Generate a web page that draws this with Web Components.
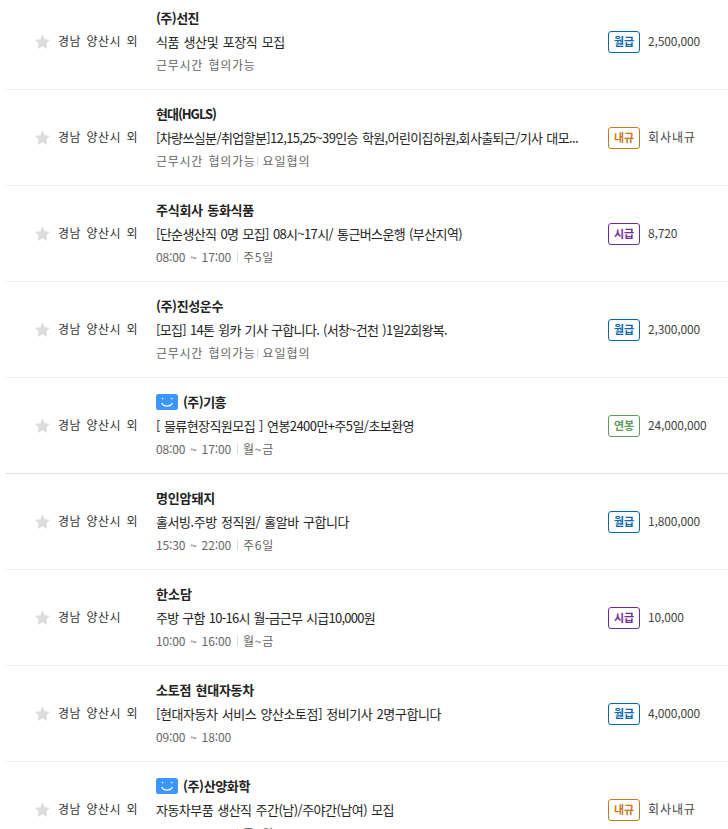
<!DOCTYPE html>
<html lang="ko">
<head>
<meta charset="utf-8">
<title>채용정보</title>
<style>
    html, body {
        margin: 0;
        height: 829px;
        overflow: hidden;
        background: #fff;
        font-family: "Noto Sans CJK KR", "Liberation Sans", sans-serif;
    }
</style>
</head>
<body>
<job-list></job-list>

<script>
const JOBS = [
    { area: '경남 양산시 외', company: '(주)선진', name: 43, title: '식품 생산및 포장직 모집', width: 129, time: '근무시간 협의가능', type: '월급', pay: '2,500,000' },
    { area: '경남 양산시 외', company: '현대(HGLS)', name: 60, title: '[차량쓰실분/취업할분]12,15,25~39인승 학원,어린이집하원,회사출퇴근/기사 대모...', width: 422, time: '근무시간 협의가능', days: '요일협의', type: '내규', pay: '회사내규' },
    { area: '경남 양산시 외', company: '주식회사 동화식품', name: 98, title: '[단순생산직 0명 모집] 08시~17시/ 통근버스운행 (부산지역)', width: 306, time: '08:00 ~ 17:00', days: '주5일', type: '시급', pay: '8,720' },
    { area: '경남 양산시 외', company: '(주)진성운수', name: 67, title: '[모집] 14톤 윙카 기사 구합니다. (서창~건천 )1일2회왕복.', width: 291, time: '근무시간 협의가능', days: '요일협의', type: '월급', pay: '2,300,000' },
    { area: '경남 양산시 외', company: '(주)기흥', name: 43, smile: true, title: '[ 물류현장직원모집 ] 연봉2400만+주5일/초보환영', width: 258, time: '08:00 ~ 17:00', days: '월~금', type: '연봉', pay: '24,000,000', last: true },
    { area: '경남 양산시 외', company: '명인암돼지', name: 59, title: '홀서빙.주방 정직원/ 홀알바 구합니다', width: 193, time: '15:30 ~ 22:00', days: '주6일', type: '월급', pay: '1,800,000' },
    { area: '경남 양산시', company: '한소담', name: 36, title: '주방 구함 10-16시 월-금근무 시급10,000원', width: 219, time: '10:00 ~ 16:00', days: '월~금', type: '시급', pay: '10,000' },
    { area: '경남 양산시 외', company: '소토점 현대자동차', name: 98, title: '[현대자동차 서비스 양산소토점] 정비기사 2명구합니다', width: 285, time: '09:00 ~ 18:00', type: '월급', pay: '4,000,000' },
    { area: '경남 양산시 외', company: '(주)산양화학', name: 67, smile: true, title: '자동차부품 생산직 주간(남)/주야간(남여) 모집', width: 238, time: '08:30 ~ 17:30', days: '주5일', type: '내규', pay: '회사내규' }
];

class StarIcon extends HTMLElement {
    constructor() {
        super();
        this.attachShadow({ mode: 'open' }).innerHTML = `
            <style>
                :host { display: block; width: 16px; height: 16px; }
                svg { display: block; }
            </style>
            <svg width="16" height="16" viewBox="0 0 16 16">
                <path fill="#ddd" d="M7.5 .2l2.3 5 5.4.6-4 3.7 1.1 5.4-4.8-2.7-4.8 2.7 1.1-5.4-4-3.7 5.4-.6z"/>
            </svg>
        `;
    }
}

class SmileIcon extends HTMLElement {
    constructor() {
        super();
        this.attachShadow({ mode: 'open' }).innerHTML = `
            <style>
                :host { display: block; width: 22px; height: 16px; margin-right: 5px; }
                svg { display: block; }
            </style>
            <svg width="22" height="16" viewBox="0 0 22 16">
                <rect width="22" height="16" rx="2.5" fill="#3c96ff"/>
                <path fill="#fff" d="M6 4h1.3v1.3H6zM15 4h1.3v1.3h-1.3z"/>
                <path d="M5.7 9c1.8 4.2 8.8 4.2 10.6 0" fill="none" stroke="#fff" stroke-width="1.2"/>
            </svg>
        `;
    }
}

class PayBadge extends HTMLElement {
    constructor() {
        super();
        this.attachShadow({ mode: 'open' }).innerHTML = `
            <style>
                :host {
                    display: block;
                    box-sizing: border-box;
                    width: 32px;
                    height: 22px;
                    border: 1px solid currentColor;
                    border-radius: 3px;
                    font-size: 11px;
                    font-weight: 700;
                    line-height: 19px;
                    text-align: center;
                    color: #0a64ae;
                }
                :host([type="내규"]) { color: #c57a1c; }
                :host([type="시급"]) { color: #702c96; }
                :host([type="연봉"]) { color: #5f9a5a; }
            </style>
            <slot></slot>
        `;
    }
}

class JobRow extends HTMLElement {
    constructor() {
        super();
        this.attachShadow({ mode: 'open' }).innerHTML = `
            <style>
                :host {
                    display: grid;
                    grid-template-columns: 23px 98px 452px 40px 1fr;
                    align-items: center;
                    box-sizing: border-box;
                    height: 96px;
                    padding-left: 29px;
                    border-bottom: 1px solid #eee;
                    font-size: 12px;
                    white-space: nowrap;
                }
                :host([last]) { border-bottom-color: #ddd; }
                .area {
                    color: #333;
                    letter-spacing: 0.5px;
                    word-spacing: 1.6px;
                    line-height: 24px;
                    margin-top: -2px;
                }
                .company {
                    display: flex;
                    align-items: center;
                    height: 24px;
                    font-size: 13px;
                    font-weight: 700;
                    color: #222;
                }
                .title {
                    height: 24px;
                    line-height: 23px;
                    font-size: 13px;
                    color: #222;
                }
                .detail {
                    height: 24px;
                    line-height: 22px;
                    color: #666;
                }
                .pay {
                    color: #444;
                    line-height: 24px;
                    margin-top: -2px;
                    letter-spacing: -0.15px;
                }
                :host([text-pay]) .pay { letter-spacing: 0.9px; }
            </style>
            <star-icon></star-icon>
            <div class="area"><slot name="area"></slot></div>
            <div>
                <div class="company"><slot name="icon"></slot><slot name="company"></slot></div>
                <div class="title"><slot name="title"></slot></div>
                <div class="detail"><slot name="detail"></slot></div>
            </div>
            <slot name="badge"></slot>
            <div class="pay"><slot name="pay"></slot></div>
        `;
    }
}

// Text line tracked to fill its width exactly
class FitText extends HTMLElement {
    connectedCallback() {
        if (this.shadowRoot) return;
        this.attachShadow({ mode: 'open' }).innerHTML = `
            <style>
                :host { display: inline-block; white-space: nowrap; word-spacing: var(--word, 1px); }
            </style>
            <slot></slot>
        `;
        const target = Number(this.getAttribute('width'));
        const natural = this.getBoundingClientRect().width;
        const spacing = (target - natural) / this.textContent.length;
        this.style.letterSpacing = spacing.toFixed(3) + 'px';
    }
}

class WorkHours extends HTMLElement {
    connectedCallback() {
        const time = this.getAttribute('time');
        const days = this.getAttribute('days');
        const digits = /^\d/.test(time);
        this.attachShadow({ mode: 'open' }).innerHTML = `
            <style>
                :host { display: flex; align-items: center; --word: 1.6px; }
                i { width: 1px; height: 10px; margin: 0 5px 0 ${digits ? 6 : 1}px; background: #ddd; }
            </style>
            <fit-text width="${digits ? 75 : 99.5}">${time}</fit-text>
            ${days ? `<i></i><fit-text width="${days.length === 4 ? 48 : 31}" style="--word:0px">${days}</fit-text>` : ''}
        `;
    }
}

class JobList extends HTMLElement {
    connectedCallback() {
        this.attachShadow({ mode: 'open' }).innerHTML = `
            <style>
                :host { display: block; margin: -6px 0 0 6px; }
            </style>
            ${JOBS.map(job => `
                <job-row ${job.last ? 'last' : ''} ${/\d/.test(job.pay) ? '' : 'text-pay'}>
                    <span slot="area">${job.area}</span>
                    ${job.smile ? '<smile-icon slot="icon"></smile-icon>' : ''}
                    <fit-text slot="company" width="${job.name}">${job.company}</fit-text>
                    <fit-text slot="title" width="${job.width}">${job.title}</fit-text>
                    <work-hours slot="detail" time="${job.time}" ${job.days ? `days="${job.days}"` : ''}></work-hours>
                    <pay-badge slot="badge" type="${job.type}">${job.type}</pay-badge>
                    <span slot="pay">${job.pay}</span>
                </job-row>
            `).join('')}
        `;
    }
}

customElements.define('star-icon', StarIcon);
customElements.define('smile-icon', SmileIcon);
customElements.define('pay-badge', PayBadge);
customElements.define('job-row', JobRow);
customElements.define('fit-text', FitText);
customElements.define('work-hours', WorkHours);
customElements.define('job-list', JobList);
</script>
</body>
</html>
